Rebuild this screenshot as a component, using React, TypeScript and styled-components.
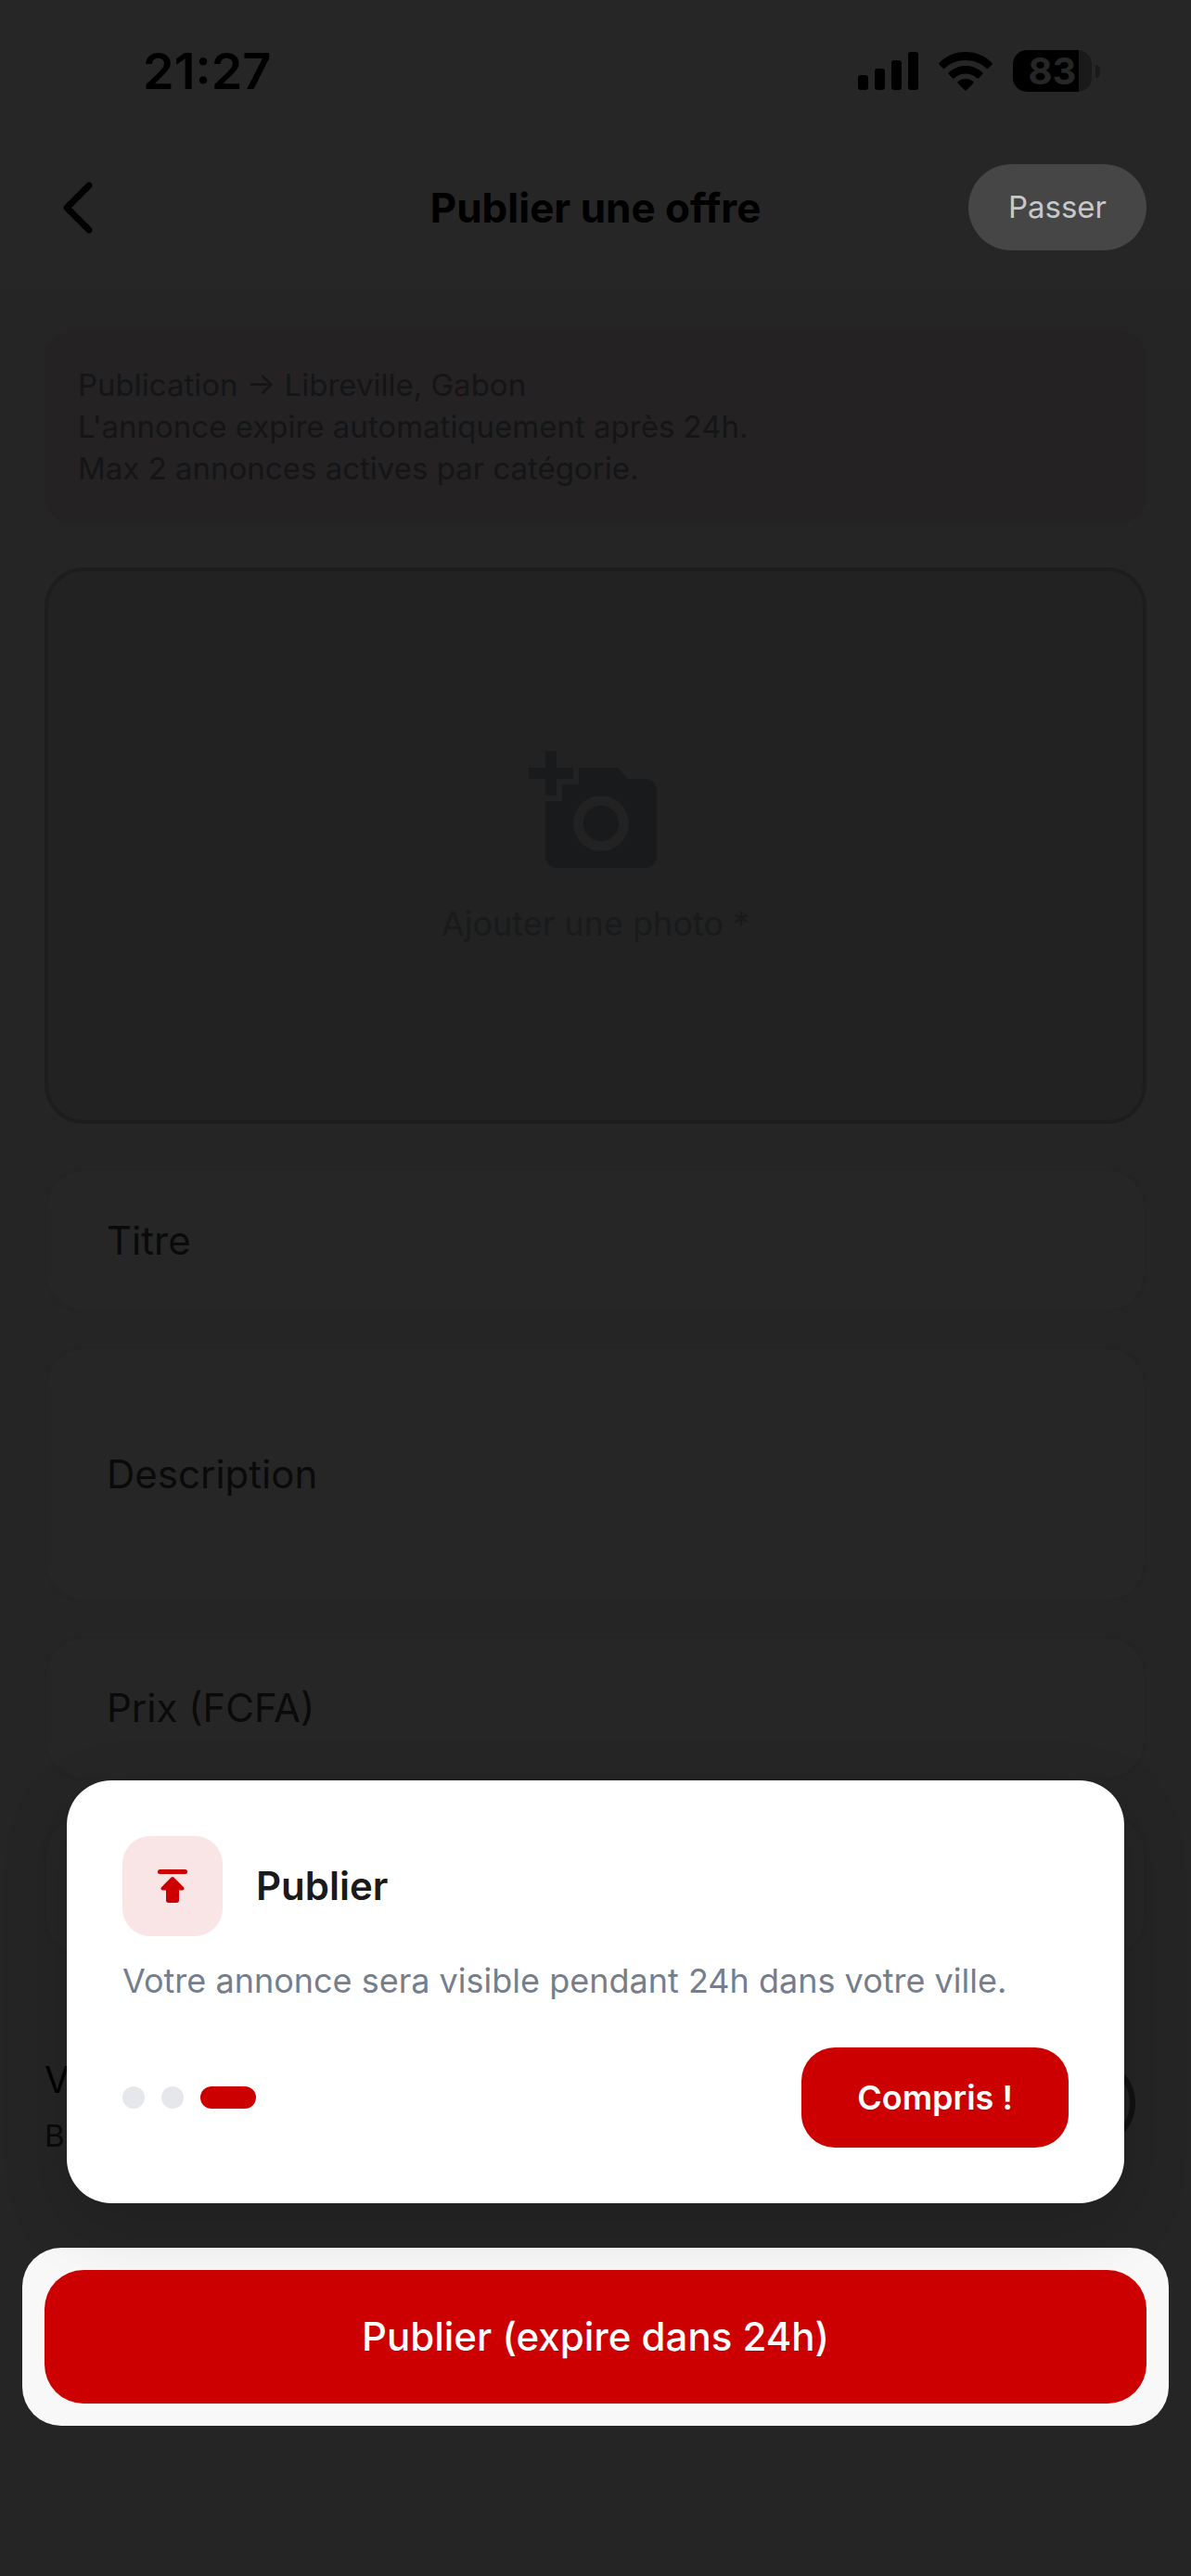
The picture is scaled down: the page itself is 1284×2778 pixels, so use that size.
import React from "react";
import styled, { createGlobalStyle } from "styled-components";
import { MdAddAPhoto } from "react-icons/md";

const Global = createGlobalStyle`
  *, *::before, *::after { box-sizing: border-box; }
  body { margin: 0; background: #252525; }
  body, button, input, textarea {
    font-family: Inter, Roboto, "Liberation Sans", sans-serif;
  }
  button { border: 0; cursor: pointer; }
  h1, h2, p { margin: 0; }
`;

const Screen = styled.div`
  min-height: 100vh;
  display: flex;
  flex-direction: column;
  background: #252525;
  color: #000;
`;

const Header = styled.header`
  background: #262626;
  padding-bottom: 18px;
`;

const StatusBar = styled.div`
  display: flex;
  align-items: center;
  justify-content: space-between;
  height: 153px;
  padding: 0 98px 0 154px;
`;

const Time = styled.time`
  font-size: 54px;
  line-height: 64px;
  font-weight: 600;
`;

const StatusIcons = styled.div`
  display: flex;
  align-items: center;
  gap: 22px;
`;

const BatteryRow = styled.div`
  display: flex;
  align-items: center;
  gap: 4px;
`;

const Battery = styled.div`
  width: 85px;
  height: 45px;
  border-radius: 15px;
  background: linear-gradient(to right, #000 71px, #1a1a1a 71px);
  color: #262626;
  font-size: 40px;
  line-height: 45px;
  font-weight: 700;
  text-align: center;
`;

const BatteryCap = styled.div`
  width: 5px;
  height: 14px;
  border-radius: 0 5px 5px 0;
  background: #1a1a1a;
`;

const NavBar = styled.nav`
  display: grid;
  grid-template-columns: 1fr auto 1fr;
  align-items: center;
  height: 141px;
  padding: 0 48px;
`;

const BackButton = styled.button`
  justify-self: start;
  display: flex;
  padding: 12px 16px;
  background: none;
`;

const PageTitle = styled.h1`
  font-size: 44px;
  line-height: 54px;
  font-weight: 700;
`;

const SkipButton = styled.button`
  justify-self: end;
  height: 93px;
  padding: 0 43px;
  border-radius: 48px;
  background: #464646;
  color: #c8c8c8;
  font-size: 33px;
  line-height: 45px;
`;

const Form = styled.form`
  flex: 1;
  display: flex;
  flex-direction: column;
  padding: 45px 48px 0;
`;

const Notice = styled.p`
  margin-bottom: 48px;
  padding: 36px;
  border-radius: 30px;
  background: #252223;
  color: #131517;
  font-size: 33px;
  line-height: 45px;
`;

const PhotoPicker = styled.button`
  display: flex;
  flex-direction: column;
  align-items: center;
  justify-content: center;
  gap: 24px;
  height: 600px;
  margin-bottom: 48px;
  border: 4px solid #1d1d1d;
  border-radius: 42px;
  background: #222222;
  color: #181a1b;
  font-size: 36px;
  line-height: 48px;
`;

const Fields = styled.div`
  display: flex;
  flex-direction: column;
  gap: 36px;
`;

const Field = styled.div<{ $tall?: boolean }>`
  display: flex;
  align-items: center;
  gap: 24px;
  height: ${(p) => (p.$tall ? 276 : 156)}px;
  padding: 0 64px;
  border: 3px solid #242424;
  border-radius: 42px;
  background: #262626;
`;

const FieldLabel = styled.label`
  color: #0b0a0a;
  font-size: 42px;
  line-height: 48px;
`;

const Input = styled.input`
  flex: 1;
  min-width: 0;
  border: 0;
  outline: 0;
  background: none;
  color: #0b0a0a;
  font-size: 42px;
`;

const TextArea = styled.textarea`
  flex: 1;
  min-width: 0;
  height: 60%;
  border: 0;
  outline: 0;
  resize: none;
  background: none;
  color: #0b0a0a;
  font-size: 42px;
`;

const SwitchRow = styled.label`
  display: flex;
  align-items: center;
  justify-content: space-between;
  height: 132px;
  margin: 90px 0;
  padding-right: 12px;
`;

const SwitchText = styled.span`
  display: flex;
  flex-direction: column;
  padding-top: 10px;
  color: #000;
  font-size: 39px;
  line-height: 60px;
`;

const SwitchHint = styled.small`
  color: #0b0a0a;
  font-size: 33px;
  line-height: 60px;
`;

const Switch = styled.input`
  appearance: none;
  width: 156px;
  height: 96px;
  margin: 0;
  border: 6px solid #131210;
  border-radius: 48px;
  background: #222222;
`;

const Spotlight = styled.div`
  position: relative;
  margin: 0 -24px 162px;
  padding: 24px;
  border-radius: 42px;
  background: #f8f8f8;
`;

const SubmitButton = styled.button`
  display: block;
  width: 100%;
  height: 144px;
  border-radius: 42px;
  background: #cc0000;
  color: #fff;
  font-size: 42px;
  line-height: 48px;
  font-weight: 500;
`;

const CoachCard = styled.section`
  position: absolute;
  left: 48px;
  right: 48px;
  bottom: calc(100% + 48px);
  display: flex;
  flex-direction: column;
  gap: 24px;
  padding: 60px;
  border-radius: 48px;
  background: #fff;
  box-shadow: 0 24px 72px rgba(0, 0, 0, 0.15);
`;

const CoachHead = styled.div`
  display: flex;
  align-items: center;
  gap: 36px;
`;

const CoachIcon = styled.div`
  display: grid;
  place-items: center;
  width: 108px;
  height: 108px;
  border-radius: 30px;
  background: #f9e5e5;
`;

const CoachTitle = styled.h2`
  color: #1a1a1a;
  font-size: 42px;
  line-height: 48px;
  font-weight: 600;
`;

const CoachText = styled.p`
  color: #757e8c;
  font-size: 36px;
  line-height: 48px;
`;

const CoachFoot = styled.div`
  display: flex;
  align-items: center;
  justify-content: space-between;
  margin-top: 24px;
`;

const Dots = styled.div`
  display: flex;
  gap: 18px;
`;

const Dot = styled.span<{ $active?: boolean }>`
  width: ${(p) => (p.$active ? 60 : 24)}px;
  height: 24px;
  border-radius: 12px;
  background: ${(p) => (p.$active ? "#cc0000" : "#e5e7eb")};
`;

const ConfirmButton = styled.button`
  height: 108px;
  padding: 0 60px;
  border-radius: 36px;
  background: #cc0000;
  color: #fff;
  font-size: 36px;
  line-height: 48px;
  font-weight: 600;
`;

const SignalIcon = () => (
  <svg width="65" height="41" viewBox="0 0 65 41" aria-hidden="true">
    <rect x="0" y="25" width="11" height="16" rx="3" />
    <rect x="18" y="18" width="11" height="23" rx="3" />
    <rect x="36" y="9" width="11" height="32" rx="3" />
    <rect x="54" y="0" width="11" height="41" rx="3" />
  </svg>
);

const WifiIcon = () => (
  <svg width="58" height="42" viewBox="0 0 58 42" aria-hidden="true">
    <path d="M29 0C17.800 0 7.600 4.500.6 11.700c-.6.600-.6 1.400 0 2l4 4.100c.5.500 1.300.5 1.900 0C12.300 12.200 20.200 9 29 9s16.700 3.200 22.500 8.800c.6.500 1.400.5 1.900 0l4-4.100c.6-.6.6-1.400 0-2C50.400 4.500 40.200 0 29 0z" />
    <path d="M29 15c-7 0-13.400 2.700-18.200 7.200-.6.500-.6 1.400 0 1.900l4.100 4.100c.5.500 1.300.5 1.900 0C20 25.300 24.300 23.500 29 23.500s9 1.800 12.200 4.700c.6.500 1.400.5 1.900 0l4.100-4.100c.6-.5.6-1.400 0-1.900C42.400 17.700 36 15 29 15z" />
    <path d="M29 29c-3.100 0-6 1.100-8.200 3-.6.500-.6 1.300-.1 1.800l7.300 7.500c.6.600 1.400.6 2 0l7.300-7.500c.5-.5.5-1.300-.1-1.800-2.200-1.900-5.100-3-8.200-3z" />
  </svg>
);

const BackIcon = () => (
  <svg width="38" height="60" viewBox="0 0 38 60" fill="none" aria-hidden="true">
    <path d="M32 6 8 30l24 24" stroke="#000" strokeWidth="7" strokeLinecap="round" strokeLinejoin="round" />
  </svg>
);

const PublishIcon = () => (
  <svg width="32" height="36" viewBox="0 0 32 36" fill="#cc0000" aria-hidden="true">
    <rect x="0" y="0" width="32" height="5" rx="2.500" />
    <path d="M14.600 8.600 4 19.200c-1.200 1.200-.4 3.300 1.300 3.300H9v11c0 1.400 1.100 2.500 2.500 2.500h9c1.400 0 2.500-1.100 2.500-2.500v-11h3.700c1.700 0 2.500-2.100 1.300-3.300L17.400 8.600c-.8-.8-2-.8-2.800 0z" />
  </svg>
);

export default function App() {
  return (
    <>
      <Global />
      <Screen>
        <Header>
          <StatusBar>
            <Time>21:27</Time>
            <StatusIcons>
              <SignalIcon />
              <WifiIcon />
              <BatteryRow>
                <Battery>83</Battery>
                <BatteryCap />
              </BatteryRow>
            </StatusIcons>
          </StatusBar>
          <NavBar>
            <BackButton type="button" aria-label="Retour">
              <BackIcon />
            </BackButton>
            <PageTitle>Publier une offre</PageTitle>
            <SkipButton type="button">Passer</SkipButton>
          </NavBar>
        </Header>

        <Form onSubmit={(e) => e.preventDefault()}>
          <Notice>
            Publication → Libreville, Gabon
            <br />
            L'annonce expire automatiquement après 24h.
            <br />
            Max 2 annonces actives par catégorie.
          </Notice>

          <PhotoPicker type="button">
            <MdAddAPhoto size={144} aria-hidden="true" />
            Ajouter une photo *
          </PhotoPicker>

          <Fields>
            <Field>
              <FieldLabel htmlFor="titre">Titre</FieldLabel>
              <Input id="titre" />
            </Field>
            <Field $tall>
              <FieldLabel htmlFor="description">Description</FieldLabel>
              <TextArea id="description" />
            </Field>
            <Field>
              <FieldLabel htmlFor="prix">Prix (FCFA)</FieldLabel>
              <Input id="prix" inputMode="numeric" />
            </Field>
            <Field>
              <Input aria-label="Catégorie" />
            </Field>
          </Fields>

          <SwitchRow>
            <SwitchText>
              V<SwitchHint>B</SwitchHint>
            </SwitchText>
            <Switch type="checkbox" role="switch" />
          </SwitchRow>

          <Spotlight>
            <SubmitButton type="submit">Publier (expire dans 24h)</SubmitButton>
            <CoachCard role="dialog" aria-labelledby="coach-title">
              <CoachHead>
                <CoachIcon>
                  <PublishIcon />
                </CoachIcon>
                <CoachTitle id="coach-title">Publier</CoachTitle>
              </CoachHead>
              <CoachText>Votre annonce sera visible pendant 24h dans votre ville.</CoachText>
              <CoachFoot>
                <Dots>
                  <Dot />
                  <Dot />
                  <Dot $active />
                </Dots>
                <ConfirmButton type="button">Compris !</ConfirmButton>
              </CoachFoot>
            </CoachCard>
          </Spotlight>
        </Form>
      </Screen>
    </>
  );
}
